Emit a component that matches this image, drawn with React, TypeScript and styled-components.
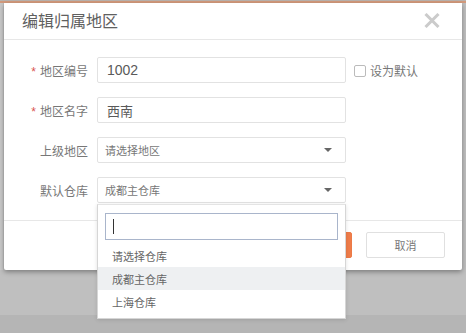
import styled, { createGlobalStyle } from "styled-components";

const GlobalStyle = createGlobalStyle`
  html, body {
    margin: 0;
    padding: 0;
    background: #bdbdbd;
  }
  * {
    box-sizing: border-box;
  }
`;

const CN = `"Liberation Sans", "Noto Sans CJK SC", sans-serif`;

const Page = styled.div`
  width: 466px;
  height: 333px;
  overflow: hidden;
  display: flex;
  flex-direction: column;
  font-family: ${CN};
  background: linear-gradient(to bottom, #bfbfbf 0, #bfbfbf 315px, #b5b5b5 315px);
`;

const TopStrip = styled.div`
  height: 3px;
  flex: none;
  background: linear-gradient(to bottom, #b9b2ad 0, #b9b2ad 1px, #d39a7c 1px);
`;

const Backdrop = styled.div`
  display: flex;
  padding-left: 4px;
  border-left: 3px solid #c9c9c9;
`;

const Modal = styled.div`
  width: 458px;
  height: 267px;
  margin-left: -3px;
  background: #fff;
  border-radius: 0 0 2px 2px;
  box-shadow: 0 2px 5px rgba(0, 0, 0, 0.35);
  display: flex;
  flex-direction: column;
`;

const Header = styled.div`
  height: 37px;
  flex: none;
  display: flex;
  align-items: center;
  justify-content: space-between;
  padding: 0 22px 2px 18px;
  border-bottom: 1px solid #e7e7e7;
`;

const Title = styled.h3`
  margin: 0;
  font-size: 16px;
  font-weight: normal;
  color: #606060;
`;

const Close = styled.button`
  border: 0;
  padding: 0;
  background: none;
  width: 16px;
  height: 15px;
  display: flex;
  cursor: pointer;
`;

const Body = styled.div`
  flex: 1;
  display: flex;
  flex-direction: column;
  gap: 14px;
  padding-top: 17px;
  border-bottom: 1px solid #e7e7e7;
`;

const Row = styled.div`
  display: flex;
  align-items: center;
  height: 26px;
`;

const Label = styled.label`
  width: 84px;
  margin-right: 9px;
  text-align: right;
  font-size: 12px;
  color: #777;
`;

const Star = styled.span`
  color: #d9534f;
  margin-right: 4px;
`;

const TextInput = styled.div<{ $big?: boolean }>`
  width: 249px;
  height: 26px;
  border: 1px solid #e2e2e2;
  border-radius: 2px;
  display: flex;
  align-items: center;
  padding-left: 9px;
  font-size: ${(p) => (p.$big ? "14px" : "13px")};
  color: #5a5a5a;
`;

const SelectBox = styled.div`
  position: relative;
  width: 249px;
  height: 26px;
  border: 1px solid #e2e2e2;
  border-radius: 2px;
  display: flex;
  align-items: center;
  justify-content: space-between;
  padding: 0 13px 0 7px;
  font-size: 11px;
  color: #777;
`;

const Caret = styled.span`
  width: 0;
  height: 0;
  border-left: 4px solid transparent;
  border-right: 4px solid transparent;
  border-top: 4px solid #666;
`;

const Check = styled.label`
  display: flex;
  align-items: center;
  margin-left: 8px;
  font-size: 12px;
  color: #777;
  gap: 4px;
  align-self: flex-start;
  margin-top: 5px;
`;

const Box = styled.span`
  width: 12px;
  height: 12px;
  border: 1px solid #bbb;
  border-radius: 2px;
`;

const Menu = styled.div`
  position: absolute;
  top: 26px;
  left: -1px;
  width: 249px;
  background: #fff;
  border: 1px solid #d6d6d6;
  border-top-color: #e4e4e4;
  box-shadow: 0 1px 4px rgba(0, 0, 0, 0.12);
  padding: 8px 0 5px;
  z-index: 5;
`;

const Search = styled.div`
  margin: 0 7px 4px 7px;
  height: 27px;
  border: 1px solid #a9b5cb;
  display: flex;
  align-items: center;
  padding-left: 7px;
`;

const Cursor = styled.span`
  width: 1px;
  height: 15px;
  background: #333;
`;

const Option = styled.div<{ $active?: boolean }>`
  height: 23px;
  display: flex;
  align-items: center;
  padding-left: 14px;
  font-size: 11px;
  color: #666;
  background: ${(p) => (p.$active ? "#eef0f2" : "#fff")};
`;

const Footer = styled.div`
  height: 49px;
  flex: none;
  display: flex;
  justify-content: flex-end;
  gap: 14px;
  padding: 11px 17px 0 0;
`;

const Button = styled.button<{ $primary?: boolean }>`
  width: 79px;
  height: 26px;
  border-radius: 2px;
  font-family: ${CN};
  font-size: 11px;
  cursor: pointer;
  border: 1px solid ${(p) => (p.$primary ? "#ec7a47" : "#e0e0e0")};
  background: ${(p) => (p.$primary ? "#ef7d4a" : "#fff")};
  color: ${(p) => (p.$primary ? "#fff" : "#777")};
`;

const options = ["请选择仓库", "成都主仓库", "上海仓库"];

export default function App() {
  return (
    <>
      <GlobalStyle />
      <Page>
        <TopStrip />
        <Backdrop>
          <Modal>
            <Header>
              <Title>编辑归属地区</Title>
              <Close aria-label="关闭">
                <svg width="16" height="15" viewBox="0 0 16 15">
                  <path d="M1.5 1 L14.5 14 M14.5 1 L1.5 14" stroke="#cbcbcb" strokeWidth="3" />
                </svg>
              </Close>
            </Header>
            <Body>
              <Row>
                <Label>
                  <Star>*</Star>地区编号
                </Label>
                <TextInput $big>1002</TextInput>
                <Check>
                  <Box />
                  设为默认
                </Check>
              </Row>
              <Row>
                <Label>
                  <Star>*</Star>地区名字
                </Label>
                <TextInput>西南</TextInput>
              </Row>
              <Row>
                <Label>上级地区</Label>
                <SelectBox>
                  请选择地区
                  <Caret />
                </SelectBox>
              </Row>
              <Row>
                <Label>默认仓库</Label>
                <SelectBox>
                  成都主仓库
                  <Caret />
                  <Menu>
                    <Search>
                      <Cursor />
                    </Search>
                    {options.map((o) => (
                      <Option key={o} $active={o === "成都主仓库"}>
                        {o}
                      </Option>
                    ))}
                  </Menu>
                </SelectBox>
              </Row>
            </Body>
            <Footer>
              <Button $primary>确定</Button>
              <Button>取消</Button>
            </Footer>
          </Modal>
        </Backdrop>
      </Page>
    </>
  );
}
